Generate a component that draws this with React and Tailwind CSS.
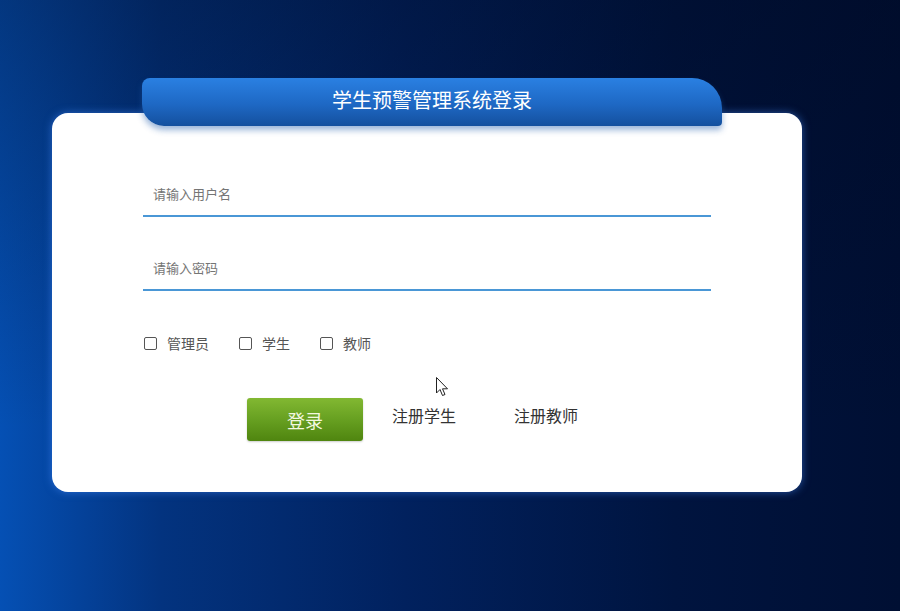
import React from "react";

function Check({ label, className = "" }) {
  return (
    <label className={`flex items-center ${className}`}>
      <span className="w-[13px] h-[13px] border border-[#555] rounded-[2px] bg-white box-border" />
      <span className="ml-[10px] text-[14px] leading-[20px] text-[#555]">{label}</span>
    </label>
  );
}

export default function App() {
  return (
    <div
      className="relative w-full h-[611px] overflow-hidden bg-[linear-gradient(to_bottom,rgba(0,8,30,0.35),rgba(0,8,30,0)_70%),linear-gradient(to_right,#0550b4_0%,#03337f_18%,#01215e_45%,#00143f_75%,#000f33_100%)]"
      style={{ fontFamily: '"Noto Sans CJK SC", "Noto Sans", sans-serif' }}
    >
      <div className="pt-[78px] ml-[52px] w-[750px]">
        <div className="relative z-10 ml-[90px] w-[580px] h-[48px] flex items-center justify-center rounded-tl-[8px] rounded-tr-[30px] rounded-br-[4px] rounded-bl-[22px] bg-[linear-gradient(to_bottom,#2a80e2,#1e68c4_55%,#14509e)] shadow-[0_4px_6px_rgba(30,90,170,0.45)]">
          <span className="text-white text-[20px] leading-none pb-[4px]">学生预警管理系统登录</span>
        </div>
        <div className="-mt-[13px] h-[379px] bg-white rounded-[16px] shadow-[0_0_8px_rgba(70,140,255,0.55)] pl-[91px] pt-[64px] flex flex-col">
          <div className="w-[568px] h-[40px] border-b-2 border-[#4a97d6] flex items-center pl-[10px] pb-[4px]">
            <span className="text-[13px] text-[#757575]">请输入用户名</span>
          </div>
          <div className="mt-[34px] w-[568px] h-[40px] border-b-2 border-[#4a97d6] flex items-center pl-[10px] pb-[4px]">
            <span className="text-[13px] text-[#757575]">请输入密码</span>
          </div>
          <div className="mt-[42px] flex items-center h-[20px] pl-[1px]">
            <Check label="管理员" />
            <Check label="学生" className="ml-[30px]" />
            <Check label="教师" className="ml-[30px]" />
          </div>
          <div className="mt-[45px] flex items-center ml-[104px]">
            <div className="w-[116px] h-[43px] rounded-[3px] flex items-center justify-center bg-[linear-gradient(to_bottom,#82b832,#67a021_50%,#4f850f)] shadow-[0_1px_2px_rgba(0,0,0,0.2)]">
              <span className="text-[18px] text-[#f4f8e0] pt-[2px]">登录</span>
            </div>
            <span className="ml-[29px] text-[16px] text-[#333] -mt-[9px]">注册学生</span>
            <span className="ml-[58px] text-[16px] text-[#333] -mt-[9px]">注册教师</span>
          </div>
        </div>
      </div>
      <svg className="absolute left-[436px] top-[377px]" width="13" height="20" viewBox="0 0 13 20">
        <path d="M0.5 0.5 L0.5 16 L4 12.5 L6.5 18.5 L9 17.5 L6.5 11.8 L11.5 11.8 Z" fill="white" stroke="#222" strokeWidth="1" strokeLinejoin="round" />
      </svg>
    </div>
  );
}
